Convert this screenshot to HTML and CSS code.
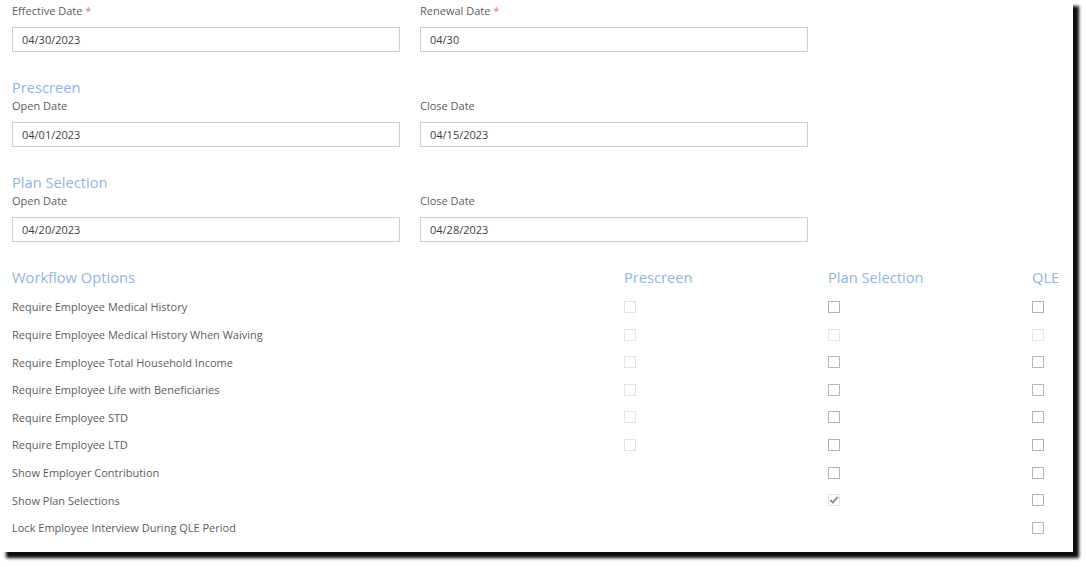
FILE: index.html
```html
<!DOCTYPE html>
<html>
<head>
<meta charset="utf-8">
<link rel="stylesheet" href="styles.css">
</head>
<body>
<div class="panel">
  <div class="fields">
    <div class="field">
      <div class="label">Effective Date <span class="req">*</span></div>
      <div class="input">04/30/2023</div>
    </div>
    <div class="field">
      <div class="label">Renewal Date <span class="req">*</span></div>
      <div class="input">04/30</div>
    </div>
  </div>

  <div class="heading">Prescreen</div>
  <div class="fields">
    <div class="field">
      <div class="label">Open Date</div>
      <div class="input">04/01/2023</div>
    </div>
    <div class="field">
      <div class="label">Close Date</div>
      <div class="input">04/15/2023</div>
    </div>
  </div>

  <div class="heading">Plan Selection</div>
  <div class="fields">
    <div class="field">
      <div class="label">Open Date</div>
      <div class="input">04/20/2023</div>
    </div>
    <div class="field">
      <div class="label">Close Date</div>
      <div class="input">04/28/2023</div>
    </div>
  </div>

  <div class="options">
    <div class="colhead">Workflow Options</div>
    <div class="colhead">Prescreen</div>
    <div class="colhead">Plan Selection</div>
    <div class="colhead">QLE</div>

    <div class="opt">Require Employee Medical History</div>
    <div class="cell"><span class="cb dis"></span></div>
    <div class="cell"><span class="cb"></span></div>
    <div class="cell"><span class="cb"></span></div>

    <div class="opt">Require Employee Medical History When Waiving</div>
    <div class="cell"><span class="cb dis"></span></div>
    <div class="cell"><span class="cb dis"></span></div>
    <div class="cell"><span class="cb dis"></span></div>

    <div class="opt">Require Employee Total Household Income</div>
    <div class="cell"><span class="cb dis"></span></div>
    <div class="cell"><span class="cb"></span></div>
    <div class="cell"><span class="cb"></span></div>

    <div class="opt">Require Employee Life with Beneficiaries</div>
    <div class="cell"><span class="cb dis"></span></div>
    <div class="cell"><span class="cb"></span></div>
    <div class="cell"><span class="cb"></span></div>

    <div class="opt">Require Employee STD</div>
    <div class="cell"><span class="cb dis"></span></div>
    <div class="cell"><span class="cb"></span></div>
    <div class="cell"><span class="cb"></span></div>

    <div class="opt">Require Employee LTD</div>
    <div class="cell"><span class="cb dis"></span></div>
    <div class="cell"><span class="cb"></span></div>
    <div class="cell"><span class="cb"></span></div>

    <div class="opt">Show Employer Contribution</div>
    <div class="cell"></div>
    <div class="cell"><span class="cb"></span></div>
    <div class="cell"><span class="cb"></span></div>

    <div class="opt">Show Plan Selections</div>
    <div class="cell"></div>
    <div class="cell"><span class="cb dis"><svg viewBox="0 0 12 12" width="12" height="12"><path d="M2.3 6.0 L4.9 8.6 L9.8 2.9" fill="none" stroke="#8a93a4" stroke-width="2"/></svg></span></div>
    <div class="cell"><span class="cb"></span></div>

    <div class="opt">Lock Employee Interview During QLE Period</div>
    <div class="cell"></div>
    <div class="cell"></div>
    <div class="cell"><span class="cb"></span></div>
  </div>
</div>
</body>
</html>
```

FILE: styles.css
```css
html, body {
  margin: 0;
  padding: 0;
  background: #ffffff;
}

body {
  font-family: "Open Sans", "Liberation Sans", sans-serif;
  font-size: 11px;
  color: #5c5c5c;
  padding-bottom: 15px;
}

.panel {
  width: 1061px;
  height: 549px;
  padding: 3px 0 0 12px;
  background: #ffffff;
  box-shadow: 6px 6px 3px rgba(0, 0, 0, 0.95);
}

.fields {
  display: grid;
  grid-template-columns: 388px 388px;
  column-gap: 20px;
}

.label {
  height: 16px;
  line-height: 16px;
  margin-bottom: 8px;
  color: #5c5c5c;
}

.req {
  color: #c0392b;
  opacity: 0.7;
}

.input {
  box-sizing: border-box;
  height: 25px;
  line-height: 23px;
  border: 1px solid #cccccc;
  padding-left: 9px;
  color: #3d3f48;
}

.heading,
.colhead {
  font-size: 14.7px;
  line-height: 20px;
  color: #8fb5e0;
}

.heading {
  margin-top: 25px;
  margin-bottom: 1px;
}

.options {
  display: grid;
  grid-template-columns: 612px 204px 204px auto;
  grid-template-rows: 26.2px;
  grid-auto-rows: 27.6px;
  margin-top: 25px;
}

.opt, .cell {
  display: flex;
  align-items: center;
}

.opt {
  color: #5c5c5c;
}

.cb {
  box-sizing: border-box;
  width: 12px;
  height: 12px;
  border: 1px solid #b5b5b5;
  background: #ffffff;
  display: block;
  position: relative;
}

.cb.dis {
  border-color: #e3e3e3;
}

.cb svg {
  position: absolute;
  left: -1px;
  top: -1px;
}
```
